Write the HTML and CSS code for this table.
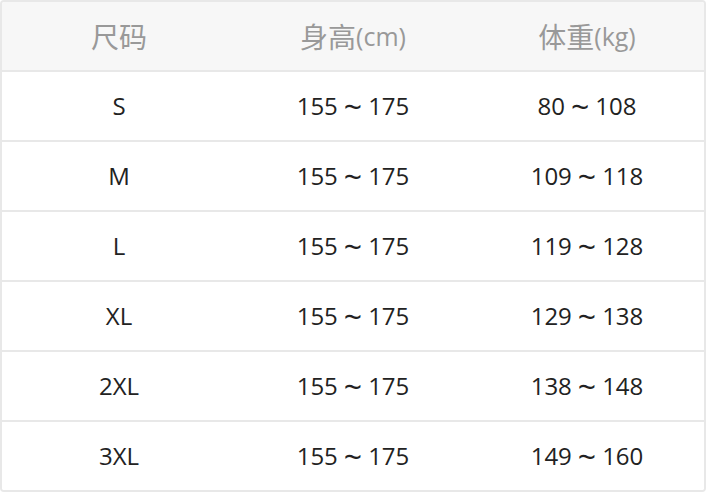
FILE: index.html
```html
<!DOCTYPE html>
<html>
<head>
<meta charset="utf-8">
<link rel="stylesheet" href="styles.css">
</head>
<body>
<div class="table">
  <div class="row head"><div class="cell"><span class="cjk">尺码</span></div><div class="cell"><span class="cjk">身高</span>(cm)</div><div class="cell"><span class="cjk">体重</span>(kg)</div></div>
  <div class="row"><div class="cell">S</div><div class="cell">155<span class="t">~</span>175</div><div class="cell">80<span class="t">~</span>108</div></div>
  <div class="row"><div class="cell">M</div><div class="cell">155<span class="t">~</span>175</div><div class="cell">109<span class="t">~</span>118</div></div>
  <div class="row"><div class="cell">L</div><div class="cell">155<span class="t">~</span>175</div><div class="cell">119<span class="t">~</span>128</div></div>
  <div class="row"><div class="cell">XL</div><div class="cell">155<span class="t">~</span>175</div><div class="cell">129<span class="t">~</span>138</div></div>
  <div class="row"><div class="cell">2XL</div><div class="cell">155<span class="t">~</span>175</div><div class="cell">138<span class="t">~</span>148</div></div>
  <div class="row"><div class="cell">3XL</div><div class="cell">155<span class="t">~</span>175</div><div class="cell">149<span class="t">~</span>160</div></div>
</div>
</body>
</html>
```
FILE: styles.css
```css
html, body { margin: 0; padding: 0; background: #fff; }
.table {
  width: 706px;
  height: 492px;
  box-sizing: border-box;
  border: 2px solid #e8e8e8;
  border-radius: 4px;
  overflow: hidden;
  display: flex;
  flex-direction: column;
  font-family: "Open Sans", "Noto Sans CJK SC", sans-serif;
  font-size: 24px;
  color: #222;
}
.row {
  display: grid;
  grid-template-columns: 1fr 1fr 1fr;
  height: 68px;
  border-bottom: 2px solid #e8e8e8;
  background: #fff;
}
.row:last-child { border-bottom: none; }
.head { background: #f7f7f7; color: #999; font-size: 25px; }
.cell {
  display: flex;
  align-items: center;
  justify-content: center;
  line-height: 1;
}
.cjk {
  font-family: "Noto Sans CJK SC", sans-serif;
  font-size: 28px;
}
.t {
  font-size: 32px;
  margin: 0 6px;
  position: relative;
  top: 1px;
}
```
